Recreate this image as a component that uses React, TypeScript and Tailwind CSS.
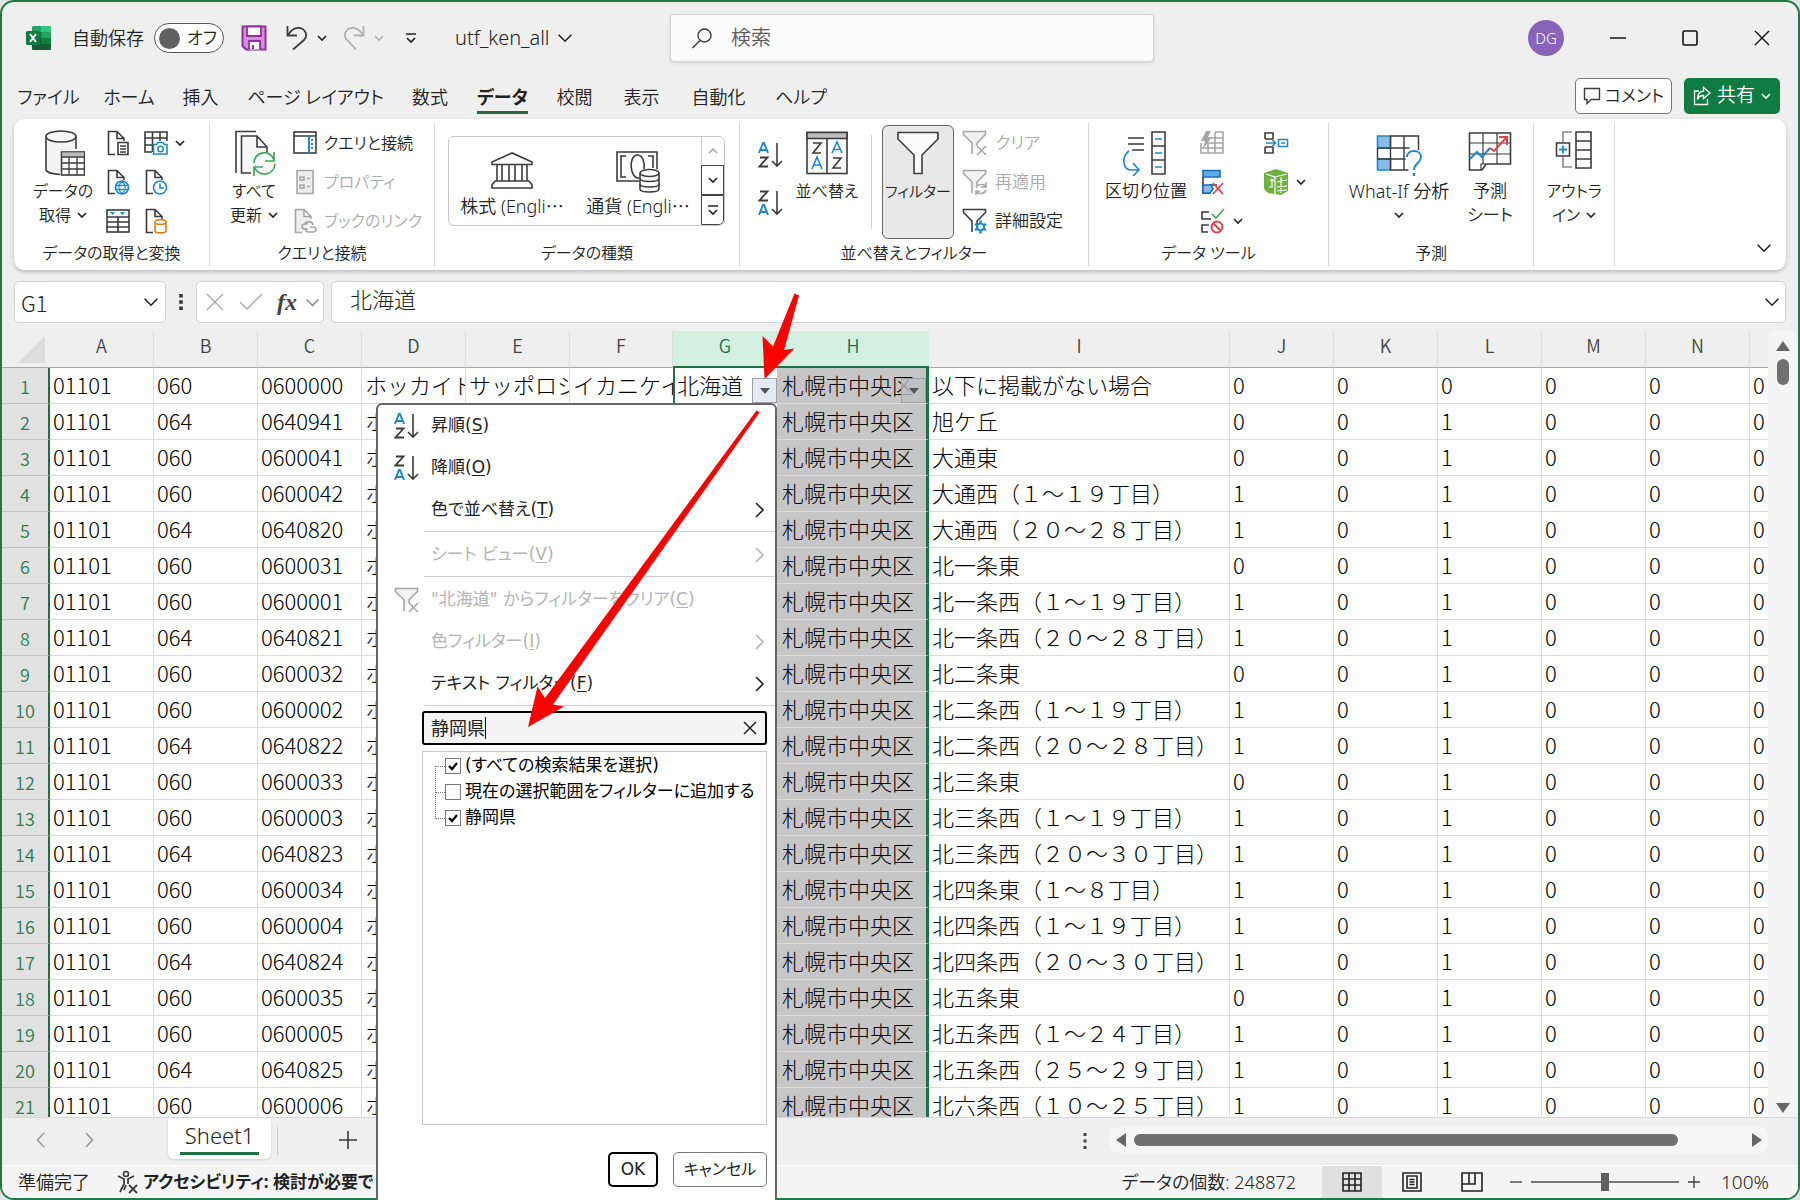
import type { ReactNode } from 'react';

// Spreadsheet window: title bar, ribbon, formula bar, grid, sheet tabs, status bar.
// The AutoFilter menu and the two callout arrows sit on top of the window.

type SvgProps = { w: number; h: number; children: ReactNode; className?: string };

const INK = '#3b3b3b';
const BLUE = '#1e88c9';
const FAINT = '#a6a6a6';

function Svg({ w, h, children, className = '' }: SvgProps) {
  return (
    <svg
      width={w}
      height={h}
      viewBox={`0 0 ${w} ${h}`}
      fill="none"
      stroke={INK}
      strokeWidth="1.6"
      className={`shrink-0 ${className}`}
      aria-hidden="true"
    >
      {children}
    </svg>
  );
}

function Chevron({ color = '#222', size = 10 }: { color?: string; size?: number }) {
  return (
    <svg width={size} height={size} viewBox="0 0 10 10" fill="none" className="shrink-0" aria-hidden="true">
      <path d="M1 3l4 4 4-4" stroke={color} strokeWidth={size > 10 ? 1 : 1.6} />
    </svg>
  );
}

/* ---------- title bar ---------- */

function ExcelLogo() {
  return (
    <Svg w={26} h={26}>
      <g stroke="none">
        <rect x="6" y="1" width="19" height="24" rx="1.5" fill="#21a366" />
        <path d="M15 1h8.500a1.500 1.500 0 011.500 1.500V7H15z" fill="#33c481" />
        <path d="M6 7h9.500v6H6z" fill="#107c41" />
        <path d="M15.500 13H25v6h-9.500z" fill="#107c41" />
        <path d="M6 13h9.500v6H6zM6 19h19v4.500a1.500 1.500 0 01-1.500 1.500h-16A1.500 1.500 0 016 23.500z" fill="#185c37" />
        <rect x="0" y="6" width="14" height="14" rx="1.500" fill="#107c41" />
      </g>
      <path d="M4 9l6 8M10 9l-6 8" stroke="#fff" strokeWidth="2" />
    </Svg>
  );
}

function TitleBar() {
  return (
    <header className="flex h-[72px] shrink-0 items-center">
      <div className="flex w-[668px] shrink-0 items-center pl-[24px]">
        <ExcelLogo />
        <label htmlFor="autosave" className="ml-[20px] text-[18px] leading-6">自動保存</label>
        <button
          id="autosave"
          type="button"
          className="ml-[10px] flex h-[30px] w-[70px] items-center rounded-full border border-[#555] bg-white pl-[4px] text-[17px]"
        >
          <span className="mr-[7px] size-[21px] rounded-full bg-[#616161]" />
          オフ
        </button>
        <button type="button" aria-label="保存" className="ml-[17px]">
          <Svg w={26} h={26}>
            <path d="M1.500 1.500h23v23H5l-3.500-3.500z" fill="#d98be0" stroke="#8e2fa0" strokeWidth="2" />
            <path d="M6 1.500h14v9.500H6zM8 24.500V16h11v8.500" fill="#fff" stroke="#8e2fa0" strokeWidth="1.800" />
            <path d="M12 24v-4" stroke="#8e2fa0" strokeWidth="2" />
          </Svg>
        </button>
        <button type="button" aria-label="元に戻す" className="ml-[18px] flex items-center gap-[8px]">
          <Svg w={24} h={26}>
            <path d="M2.500 1v9.500h9.500M3 10c3-5 7-8 12-7 6 1.500 8 8 4 12L8 24.500" strokeWidth="1.800" />
          </Svg>
          <Chevron />
        </button>
        <button type="button" aria-label="やり直し" className="ml-[15px] flex items-center gap-[8px]">
          <Svg w={24} h={26}>
            <path d="M21.500 1v9.500H12M21 10C18 5 14 2 9 3 3 4.500 1 11 5 15l9 9.500" stroke="#b0b0b0" strokeWidth="1.800" />
          </Svg>
          <Chevron color="#b0b0b0" />
        </button>
        <button type="button" aria-label="カスタマイズ" className="ml-[21px]">
          <Svg w={12} h={12}>
            <path d="M1 2h10M2 6l4 4 4-4" stroke="#222" strokeWidth="1.700" />
          </Svg>
        </button>
        <button type="button" className="ml-[38px] flex items-center gap-[7px] text-[20px]">
          utf_ken_all <Chevron size={16} />
        </button>
      </div>
      <div className="flex h-[48px] w-[484px] shrink-0 items-center rounded-[4px] border border-[#d4d4d4] bg-[#fbfbfb] pl-[20px] shadow-sm">
        <Svg w={22} h={22}>
          <circle cx="13.500" cy="8.500" r="6.500" strokeWidth="1.400" />
          <path d="M9 13.500L1.500 21" strokeWidth="1.400" />
        </Svg>
        <input
          aria-label="検索"
          placeholder="検索"
          className="ml-[18px] min-w-0 flex-1 bg-transparent text-[20px] outline-none placeholder:text-[#5a5a5a]"
        />
      </div>
      <div className="flex flex-1 items-center justify-end pr-[28px]">
        <span className="mr-[46px] grid size-[36px] place-items-center rounded-full bg-[#8764b8] text-[15px] text-white">DG</span>
        <button type="button" aria-label="最小化" className="mr-[56px]">
          <Svg w={16} h={18}><path d="M0 9h16" stroke="#111" /></Svg>
        </button>
        <button type="button" aria-label="最大化" className="mr-[56px]">
          <Svg w={16} h={18}><rect x="1" y="2" width="14" height="14" rx="1.500" stroke="#111" /></Svg>
        </button>
        <button type="button" aria-label="閉じる">
          <Svg w={16} h={18}><path d="M1 2l14 14M15 2L1 16" stroke="#111" strokeWidth="1.400" /></Svg>
        </button>
      </div>
    </header>
  );
}

const TABS = [
  { label: 'ファイル', width: 'w-[87px]' },
  { label: 'ホーム', width: 'w-[74px]' },
  { label: '挿入', width: 'w-[69px]' },
  { label: 'ページ レイアウト', width: 'w-[161px]' },
  { label: '数式', width: 'w-[68px]' },
  { label: 'データ', width: 'w-[77px]' },
  { label: '校閲', width: 'w-[67px]' },
  { label: '表示', width: 'w-[67px]' },
  { label: '自動化', width: 'w-[87px]' },
  { label: 'ヘルプ', width: 'w-[78px]' },
];

function TabStrip() {
  return (
    <nav className="flex h-[45px] shrink-0 items-center pr-[18px] pl-[3px] text-[18px]">
      {TABS.map((tab) => (
        <button key={tab.label} type="button" className={`flex h-[38px] shrink-0 flex-col items-center whitespace-nowrap ${tab.width}`}>
          <span className={`block h-[36px] leading-[38px] ${tab.label === 'データ' ? 'border-b-[3px] border-[#1e6b41] font-bold' : ''}`}>
            {tab.label}
          </span>
        </button>
      ))}
      <div className="flex flex-1 justify-end gap-[12px] pb-[2px]">
        <button type="button" className="flex h-[36px] w-[97px] items-center justify-center gap-[4px] rounded-[5px] border border-[#777] bg-white text-[17px] whitespace-nowrap">
          <Svg w={18} h={18}><path d="M1.500 1.500h15v11H8l-4 4v-4H1.500z" strokeWidth="1.400" /></Svg>
          コメント
        </button>
        <button type="button" className="flex h-[36px] w-[96px] items-center justify-center gap-[6px] rounded-[5px] bg-[#107c41] text-[19px] whitespace-nowrap text-white">
          <Svg w={18} h={20}>
            <path d="M6 5H1.500v13.500h13V13M10.500 1.500L17 7l-6.500 5.500V9.500c-3 0-5 1-6 4 0-5 2-8 6-8.500z" stroke="#fff" strokeWidth="1.300" />
          </Svg>
          共有
          <Chevron color="#fff" size={10} />
        </button>
      </div>
    </nav>
  );
}

/* ---------- ribbon icons ---------- */

function DatabaseIcon() {
  return (
    <Svg w={44} h={46}>
      <path d="M6 9v30c1 2 6 4 13 4V21h15V9c-6 4-22 4-28 0z" fill="#f4f4f4" stroke="none" />
      <ellipse cx="20" cy="6.500" rx="15" ry="5.500" fill="#f7f7f7" />
      <path d="M5 6.500v33c0 2.500 6 4.500 14 5M35 6.500V19" />
      <rect x="20.500" y="22" width="23" height="23" fill="#fff" />
      <path d="M21 22.500h22v4H21z" fill="#bbb" stroke="none" />
      <path d="M20.500 27h23M20.500 33h23M20.500 39h23M28 27v18M36 27v18" strokeWidth="1.300" />
    </Svg>
  );
}

function RefreshAllIcon() {
  return (
    <Svg w={44} h={46}>
      <path d="M4 43V1.500h20" />
      <path d="M19 43H9.500V6H25l10 11v6" fill="#f7f7f7" />
      <path d="M25 6v11h10" />
      <g stroke="#3fa65a" strokeWidth="1.700">
        <path d="M22 33c0-12 17-14 20-3M42 22v9h-9M43 34c-1 12-17 13-20 4M22 46v-9h9" />
      </g>
    </Svg>
  );
}

// Small document outline shared by several data-source buttons.
function Doc({ children, muted = false }: { children?: ReactNode; muted?: boolean }) {
  return (
    <Svg w={24} h={26}>
      <path d="M9 24.500H2.500v-23H11l7 7V11M11 1.500v7h7" stroke={muted ? FAINT : INK} fill={muted ? '#eee' : 'none'} />
      {children}
    </Svg>
  );
}

function TableCameraIcon() {
  return (
    <Svg w={24} h={26}>
      <path d="M8 22H1V2h22v9M1 8h22M1 15h8M8.500 2v20M16 2v9" />
      <path d="M9.500 14.500h3l1.500-2h5l1.500 2h2.500v9.500H9.500z" stroke={BLUE} fill="#fff" />
      <circle cx="16.500" cy="19" r="2.700" stroke={BLUE} />
    </Svg>
  );
}

function TableIcon() {
  return (
    <Svg w={24} h={26}>
      <rect x="1" y="2" width="22" height="22" />
      <path d="M1 9h22M1 14h22M1 19h22M12 9v15" />
      <path d="M4 4h5l-2.500 3zM14 4h5l-2.500 3z" fill={BLUE} stroke="none" />
    </Svg>
  );
}

function BankIcon() {
  return (
    <Svg w={44} h={38}>
      <path d="M2 11v2.500h40V11L22 2z" />
      <path d="M7 13.500v16M12 13.500v16M19 13.500v16M25 13.500v16M32 13.500v16M37 13.500v16M5 30h34l3 4v3H2v-3z" />
    </Svg>
  );
}

function CurrencyIcon() {
  return (
    <Svg w={46} h={46}>
      <path d="M24 34H2V5h40v17" />
      <path d="M11 9H6v21h5M33 9h5v12" />
      <path d="M24 31c-9 1-11-22-2-23 6 0 8 8 7 14" />
      <path d="M25 26v16c0 4 19 4 19 0V26" fill="#fff" />
      <ellipse cx="34.500" cy="26" rx="9.500" ry="3.500" fill="#fff" />
      <path d="M25 31.500c0 4 19 4 19 0M25 37c0 4 19 4 19 0" />
    </Svg>
  );
}

function SortGlyph({ desc = false }: { desc?: boolean }) {
  const a = desc ? 14 : 0;
  const z = desc ? 0 : 14;
  return (
    <Svg w={26} h={26}>
      <path d={`M1 ${a + 11}l4-10h1l4 10M3 ${a + 8}h5`} stroke={BLUE} strokeWidth="2" />
      <path d={`M2 ${z + 1.5}h7.500l-8 9h8.500`} strokeWidth="1.800" />
      <path d="M19 1v23M14 19l5 5 5-5" />
    </Svg>
  );
}

function SortDialogIcon() {
  return (
    <Svg w={44} h={44}>
      <rect x="2" y="1.500" width="40" height="41" fill="#fafafa" />
      <path d="M2 1.500h40v6H2z" fill="#bdbdbd" />
      <path d="M22 7.500v35" />
      <path d="M8 12h8L8 22h8M28 27h8l-8 10h8" />
      <path d="M7 38l5-12 5 12M9 34h6M27 22l5-11 5 11M29 18.500h6" stroke={BLUE} />
    </Svg>
  );
}

function FunnelIcon() {
  return (
    <Svg w={44} h={44}>
      <path d="M2 1.500h40V8L26 24v18.500h-8V24L2 8z" fill="#fbfbfb" />
    </Svg>
  );
}

function SmallFunnel({ children, muted = false }: { children?: ReactNode; muted?: boolean }) {
  return (
    <Svg w={26} h={26}>
      <path d="M10 24V13L1.500 4.500v-3h22v3L15 13v3" stroke={muted ? FAINT : INK} fill={muted ? '#f2f2f2' : 'none'} />
      {children}
    </Svg>
  );
}

function ClearMark() {
  return <path d="M15 16l9 9M24 16l-9 9" stroke={FAINT} />;
}

function TextToColumnsIcon() {
  return (
    <Svg w={46} h={46}>
      <path d="M5 8h16M5 14h16M9 20h12" />
      <path d="M6 21C-1 26-1 38 7 40h9M10 33l6 7-6 6" stroke={BLUE} />
      <path d="M29 2h13v42H29zM29 16h13M29 30h13" />
      <path d="M32 9h7M32 23h7M32 37h7" stroke={BLUE} />
    </Svg>
  );
}

function WhatIfIcon() {
  return (
    <Svg w={46} h={46}>
      <path d="M1.500 6h13v12h-13zM1.500 29h13v11h-13z" fill="#83bdec" stroke={BLUE} />
      <path d="M14.500 6h28v14M1.500 18h32M1.500 29h28M14.500 40h18M14.500 6v34M28 6v34M1.500 18v11" strokeWidth="1.400" />
      <path d="M31 27c0-8 14-8 14 0 0 6-7 6-7 13" stroke={BLUE} strokeWidth="2" />
      <path d="M38 43v3" stroke={BLUE} strokeWidth="2.400" />
    </Svg>
  );
}

function ForecastIcon() {
  return (
    <Svg w={44} h={44}>
      <path d="M1.500 2h41v31H18l-4 6H1.500z" />
      <path d="M1.500 12h41M1.500 23h41M15 2v31M29 2v31M18 33h-5v6" strokeWidth="1.200" />
      <path d="M2 28l7-7 5 5 8-9" stroke={BLUE} strokeWidth="2" />
      <path d="M22 17l4 3L38 7M31 6h8v8" stroke="#e0434b" strokeWidth="2" />
    </Svg>
  );
}

function OutlineIcon() {
  return (
    <Svg w={40} h={44}>
      <path d="M22 1h15v36H22zM22 10h15M22 19h15M22 28h15" />
      <path d="M18 1H9v10M9 26v10h9" stroke="#888" />
      <path d="M2.500 12h13v13h-13z" />
      <path d="M9 14.500v8M5 18.500h8" stroke={BLUE} strokeWidth="1.800" />
    </Svg>
  );
}

/* ---------- ribbon ---------- */

function Group({ label, className, children }: { label: string; className: string; children: ReactNode }) {
  return (
    <section aria-label={label} className={`mt-[4px] mb-[4px] flex shrink-0 flex-col border-r border-[#d8d8d8] ${className}`}>
      <div className="flex h-[119px]">{children}</div>
      <div className="text-center text-[16px] leading-[26px]">{label}</div>
    </section>
  );
}

function BigButton({ icon, lines, className, chevron = false }: { icon: ReactNode; lines: string[]; className: string; chevron?: boolean }) {
  return (
    <button type="button" className={`flex shrink-0 flex-col items-center pt-[8px] leading-[24px] whitespace-nowrap ${className}`}>
      <span className="mb-[4px] flex h-[44px] items-center">{icon}</span>
      {lines.map((line, i) => (
        <span key={i} className="flex min-h-[24px] items-center gap-[6px]">
          {line}
          {chevron && i === lines.length - 1 && <Chevron />}
        </span>
      ))}
    </button>
  );
}

function SmallButton({ icon, label, muted = false, chevron = false }: { icon: ReactNode; label?: string; muted?: boolean; chevron?: boolean }) {
  return (
    <button type="button" className={`flex h-[39px] items-center gap-[7px] whitespace-nowrap ${muted ? 'text-[#ababab]' : ''}`}>
      {icon}
      {label}
      {chevron && <Chevron />}
    </button>
  );
}

function GalleryItem({ icon, label }: { icon: ReactNode; label: string }) {
  return (
    <button type="button" className="flex w-[126px] flex-col items-center pt-[10px] text-[18px] leading-[24px] whitespace-nowrap">
      <span className="flex h-[46px] items-center">{icon}</span>
      <span>
        {label}
        <span lang="ja" className="font-['Noto_Sans_CJK_JP',sans-serif] [font-feature-settings:normal]">⋯</span>
      </span>
    </button>
  );
}

function Ribbon() {
  return (
    <div className="mx-[12px] flex h-[151px] shrink-0 rounded-[10px] bg-white text-[16px] shadow-[0_2px_4px_rgba(0,0,0,0.22)]">
      <Group label="データの取得と変換" className="w-[196px]">
        <BigButton icon={<DatabaseIcon />} lines={['データの', '取得']} chevron className="ml-[15px] w-[68px]" />
        <div className="ml-[9px]">
          <SmallButton icon={<Doc><path d="M12 12.500h10v12H12zM14 16h6M14 19h6M14 22h6" /></Doc>} />
          <SmallButton
            icon={
              <Doc>
                <circle cx="16" cy="18.500" r="6.500" stroke={BLUE} fill="#fff" />
                <path d="M9.500 16.500h13M9.500 20.500h13M16 12c-4 4-4 9 0 13 4-4 4-9 0-13z" stroke={BLUE} strokeWidth="1.300" />
              </Doc>
            }
          />
          <SmallButton icon={<TableIcon />} />
        </div>
        <div className="ml-[14px]">
          <SmallButton icon={<TableCameraIcon />} chevron />
          <SmallButton
            icon={
              <Doc>
                <circle cx="16" cy="18.500" r="6.500" stroke={BLUE} fill="#fff" />
                <path d="M16 14.500v4.500h4" stroke={BLUE} />
              </Doc>
            }
          />
          <SmallButton
            icon={
              <Doc>
                <path d="M11 14v9c0 2.500 11 2.500 11 0v-9" stroke="#dd7a16" fill="#fff" />
                <ellipse cx="16.500" cy="14" rx="5.500" ry="2.300" stroke="#dd7a16" fill="#fff" />
              </Doc>
            }
          />
        </div>
      </Group>

      <Group label="クエリと接続" className="w-[225px]">
        <BigButton icon={<RefreshAllIcon />} lines={['すべて', '更新']} chevron className="ml-[8px] w-[72px]" />
        <div className="ml-[3px]">
          <SmallButton
            label="クエリと接続"
            icon={
              <Svg w={24} h={26}>
                <rect x="1" y="2" width="22" height="21" />
                <path d="M1 6h22" />
                <path d="M16 6v17M19 9v2M19 13v2M19 17v2" stroke={BLUE} strokeWidth="2" />
              </Svg>
            }
          />
          <SmallButton
            muted
            label="プロパティ"
            icon={
              <Svg w={24} h={26}>
                <path d="M4 1.500h16v23H4z" stroke={FAINT} fill="#eee" />
                <path d="M7 8h4v3H7zM7 16h4v3H7zM14 9.500h3M14 17.500h3" stroke={FAINT} />
              </Svg>
            }
          />
          <SmallButton
            muted
            label="ブックのリンク"
            icon={
              <Doc muted>
                <path d="M15 16h-3c-4 0-4 5 0 5h3M17 19h3c4 0 4 5 0 5h-4c-3 0-4-2-3-4M12 16c0-3 8-3 8 1" stroke={FAINT} fill="none" />
              </Doc>
            }
          />
        </div>
      </Group>

      <Group label="データの種類" className="w-[305px]">
        <div className="mt-[13px] ml-[13px] flex h-[90px] w-[277px] overflow-hidden rounded-[6px] border border-[#c8c8c8]">
          <GalleryItem icon={<BankIcon />} label="株式 (Engli" />
          <GalleryItem icon={<CurrencyIcon />} label="通貨 (Engli" />
          <div className="flex flex-1 flex-col">
            <button type="button" aria-label="前へ" className="grid flex-1 place-items-center border-l border-[#ccc]">
              <Svg w={10} h={10}><path d="M1 7l4-4 4 4" stroke="#aaa" /></Svg>
            </button>
            <button type="button" aria-label="次へ" className="grid flex-1 place-items-center border border-[#444]"><Chevron /></button>
            <button type="button" aria-label="その他" className="grid flex-1 place-items-center rounded-br-[5px] border border-[#444]">
              <Svg w={12} h={12}><path d="M1 2h10M2 6l4 4 4-4" stroke="#222" /></Svg>
            </button>
          </div>
        </div>
      </Group>

      <Group label="並べ替えとフィルター" className="w-[349px]">
        <div className="ml-[18px] flex flex-col gap-[22px] pt-[19px]">
          <button type="button" aria-label="昇順"><SortGlyph /></button>
          <button type="button" aria-label="降順"><SortGlyph desc /></button>
        </div>
        <BigButton icon={<SortDialogIcon />} lines={['並べ替え']} className="ml-[8px] w-[70px]" />
        <div className="mt-[12px] ml-[9px] h-[94px] w-px bg-[#d0d0d0]" />
        <button type="button" aria-pressed="true" className="mt-[2px] ml-[10px] flex h-[114px] w-[72px] shrink-0 flex-col items-center rounded-[6px] border border-[#666] bg-[#e8e8e8] pt-[5px] text-[15px] leading-[24px] whitespace-nowrap">
          <span className="mb-[4px]"><FunnelIcon /></span>
          フィルター
        </button>
        <div className="ml-[8px] text-[17px]">
          <SmallButton muted label="クリア" icon={<SmallFunnel muted><ClearMark /></SmallFunnel>} />
          <SmallButton
            muted
            label="再適用"
            icon={
              <SmallFunnel muted>
                <path d="M14 19c1-4 8-5 10-1M24 13v5h-5M24 21c-1 4-8 5-10 1M14 26v-4h4" stroke={FAINT} />
              </SmallFunnel>
            }
          />
          <SmallButton
            label="詳細設定"
            icon={
              <SmallFunnel>
                <path d="M18.500 12.500v13M13 16l11 6M13 22l11-6" stroke={BLUE} strokeWidth="2.400" />
                <circle cx="18.500" cy="19" r="3.500" stroke={BLUE} strokeWidth="2.200" fill="#fff" />
              </SmallFunnel>
            }
          />
        </div>
      </Group>

      <Group label="データ ツール" className="w-[240px]">
        <BigButton icon={<TextToColumnsIcon />} lines={['区切り位置']} className="ml-[12px] w-[90px] text-[17px]" />
        <div className="ml-[9px] w-[49px]">
          <SmallButton
            icon={
              <Svg w={24} h={26}>
                <path d="M1 13v10h22V2h-8M1 18h22M8 12v11M15 2v21M11 8h12M9 13h14" stroke={FAINT} />
                <path d="M6 1L1 11h4l-2 8 9-12H8l3-6z" fill={FAINT} stroke="none" />
              </Svg>
            }
          />
          <SmallButton
            icon={
              <Svg w={24} h={26}>
                <path d="M3 1.500h17V8H3z" fill="#5ea9e6" stroke="#1672b8" />
                <path d="M3 8v16h7v-8h7" />
                <path d="M3 16h8l2 4-3 4H3z" fill="#83bdec" stroke="#1672b8" />
                <path d="M13 14l10 11M23 14L13 25" stroke="#e0434b" strokeWidth="1.800" />
              </Svg>
            }
          />
          <SmallButton
            chevron
            icon={
              <Svg w={26} h={26}>
                <path d="M9 4H2v7h9M9 17H2v7h6" />
                <path d="M12 6l4 4 8-9" stroke="#3fa65a" />
                <circle cx="17" cy="19" r="5.500" stroke="#e0434b" strokeWidth="2" />
                <path d="M13 15l8 8" stroke="#e0434b" strokeWidth="2" />
              </Svg>
            }
          />
        </div>
        <div className="ml-[14px]">
          <SmallButton
            icon={
              <Svg w={26} h={26}>
                <path d="M2 9V3h8v6M2 17v6h8v-6M2 9h8M2 17h8" />
                <path d="M3 13h9M9 9.500l3.500 3.500L9 16.500M15.500 9.500h9v7h-9zM18 13h4" stroke={BLUE} />
              </Svg>
            }
          />
          <SmallButton
            chevron
            icon={
              <Svg w={26} h={26}>
                <path d="M1 4l12-4 12 4v18l-7 4-13-2-4-4z" fill="#6cb33e" stroke="none" />
                <path d="M3 5l9 3v17M12 8l12-3" stroke="#fff" strokeWidth="1.200" />
                <path d="M6 18h3v-8M7 12l2-2 2 2M14 13l10-2M14 18l10-1M14 22l10-1M18 8v16" stroke="#fff" strokeWidth="1.200" />
              </Svg>
            }
          />
        </div>
      </Group>

      <Group label="予測" className="w-[205px]">
        <BigButton icon={<WhatIfIcon />} lines={['What-If 分析', '']} chevron className="ml-[10px] w-[120px] text-[18px]" />
        <BigButton icon={<ForecastIcon />} lines={['予測', 'シート']} className="ml-[4px] w-[54px] text-[17px]" />
      </Group>

      <section aria-label="アウトライン" className="mt-[4px] mb-[4px] w-[81px] shrink-0 border-r border-[#d8d8d8]">
        <BigButton icon={<OutlineIcon />} lines={['アウトラ', 'イン']} chevron className="w-full" />
      </section>
      <button type="button" aria-label="リボンを折りたたむ" className="mb-[14px] ml-auto self-end pr-[14px]">
        <Chevron size={16} />
      </button>
    </div>
  );
}

/* ---------- formula bar ---------- */

function FormulaBar() {
  return (
    <div className="mx-[12px] mt-[11px] flex h-[42px] shrink-0 items-stretch font-['Noto_Sans_CJK_JP',sans-serif] text-[22px] font-light [font-feature-settings:normal]">
      <div className="flex w-[152px] shrink-0 items-center rounded-[5px] border border-[#d4d4d4] bg-white pr-[6px] pl-[6px]">
        <input aria-label="名前ボックス" defaultValue="G1" className="min-w-0 flex-1 bg-transparent pt-px outline-none" />
        <Chevron size={16} />
      </div>
      <div className="flex w-[30px] shrink-0 items-center justify-center">
        <Svg w={4} h={16}><path d="M2 0v3.500M2 6.250v3.500M2 12.500V16" stroke="#333" strokeWidth="3.500" /></Svg>
      </div>
      <div className="flex w-[128px] shrink-0 items-center rounded-[5px] border border-[#d4d4d4] bg-white pl-[9px]">
        <button type="button" aria-label="キャンセル"><Svg w={18} h={18}><path d="M1 1l16 16M17 1L1 17" stroke="#aaa" strokeWidth="1.400" /></Svg></button>
        <button type="button" aria-label="入力" className="ml-[15px]"><Svg w={24} h={18}><path d="M1 9l7 7L23 1" stroke="#aaa" strokeWidth="1.400" /></Svg></button>
        <button type="button" aria-label="関数の挿入" className="ml-[14px] font-['Liberation_Serif',serif] text-[24px] leading-none font-bold text-[#444] italic">fx</button>
        <span className="ml-[8px]"><Chevron color="#888" size={15} /></span>
      </div>
      <div className="ml-[7px] flex flex-1 items-center rounded-[5px] border border-[#d4d4d4] bg-white pr-[5px] pl-[18px]">
        <input aria-label="数式バー" defaultValue="北海道" className="min-w-0 flex-1 bg-transparent pb-[7px] outline-none" />
        <Chevron size={16} />
      </div>
    </div>
  );
}

/* ---------- grid ---------- */

const COLUMNS = [
  { name: 'A', width: 'w-[104px]' },
  { name: 'B', width: 'w-[104px]' },
  { name: 'C', width: 'w-[104px]' },
  { name: 'D', width: 'w-[104px]' },
  { name: 'E', width: 'w-[104px]' },
  { name: 'F', width: 'w-[103px]' },
  { name: 'G', width: 'w-[104px]' },
  { name: 'H', width: 'w-[152px]' },
  { name: 'I', width: 'w-[301px]' },
  { name: 'J', width: 'w-[104px]' },
  { name: 'K', width: 'w-[104px]' },
  { name: 'L', width: 'w-[104px]' },
  { name: 'M', width: 'w-[104px]' },
  { name: 'N', width: 'w-[104px]' },
  { name: '', width: 'w-[104px]' },
];

// [old postal code, postal code, town, spans several blocks]
const TOWNS: Array<[string, string, string, string]> = [
  ['060', '0600000', '以下に掲載がない場合', '0'],
  ['064', '0640941', '旭ケ丘', '0'],
  ['060', '0600041', '大通東', '0'],
  ['060', '0600042', '大通西（１～１９丁目）', '1'],
  ['064', '0640820', '大通西（２０～２８丁目）', '1'],
  ['060', '0600031', '北一条東', '0'],
  ['060', '0600001', '北一条西（１～１９丁目）', '1'],
  ['064', '0640821', '北一条西（２０～２８丁目）', '1'],
  ['060', '0600032', '北二条東', '0'],
  ['060', '0600002', '北二条西（１～１９丁目）', '1'],
  ['064', '0640822', '北二条西（２０～２８丁目）', '1'],
  ['060', '0600033', '北三条東', '0'],
  ['060', '0600003', '北三条西（１～１９丁目）', '1'],
  ['064', '0640823', '北三条西（２０～３０丁目）', '1'],
  ['060', '0600034', '北四条東（１～８丁目）', '1'],
  ['060', '0600004', '北四条西（１～１９丁目）', '1'],
  ['064', '0640824', '北四条西（２０～３０丁目）', '1'],
  ['060', '0600035', '北五条東', '0'],
  ['060', '0600005', '北五条西（１～２４丁目）', '1'],
  ['064', '0640825', '北五条西（２５～２９丁目）', '1'],
  ['060', '0600006', '北六条西（１０～２５丁目）', '1'],
];

function FilterButton({ shaded = false }: { shaded?: boolean }) {
  return (
    <button
      type="button"
      aria-label="フィルター"
      className={`absolute right-0 bottom-0 grid size-[25px] place-items-center border border-[#a0a0a0] ${shaded ? 'bg-[#bdbfc2]/80' : 'bg-[#e4e9f2]'}`}
    >
      <Svg w={10} h={6}><path d="M0 0h10L5 6z" fill="#555" stroke="none" /></Svg>
    </button>
  );
}

function cellClass(col: number) {
  if (col === 5) return 'pl-[3px] bg-white';
  if (col === 6) return 'pl-[2px] border-l-2 border-l-[#1e7145] bg-white';
  if (col === 7) return 'pl-[5px] border-r-[3px] border-r-[#1e7145] border-b-[#b0b0b0] bg-[#c6c6c6]';
  return 'pl-[3px] border-r border-r-[#dcdcdc] border-b-[#dcdcdc] bg-white';
}

function rowCells(r: number) {
  const [oldCode, code, town, blocks] = TOWNS[r];
  const names = r === 0 ? ['ホッカイド', 'サッポロシ', 'イカニケイ', '北海道'] : ['ホ', '', '', ''];
  return ['01101', oldCode, code, ...names, '札幌市中央区', town, blocks, '0', r === 0 ? '0' : '1', '0', '0', '0'];
}

function Grid() {
  return (
    <div className="min-w-0 flex-1 overflow-hidden">
      <table className="w-[1852px] table-fixed border-separate border-spacing-0 font-['Noto_Sans_CJK_JP',sans-serif] text-[22px] font-light whitespace-nowrap text-black">
        <thead>
          <tr className="h-[37px] text-[18px] leading-[26px] text-[#444]">
            <th className="w-[48px] border-b border-[#a8a8a8] p-0" aria-label="すべて選択">
              <Svg w={28} h={28} className="mt-[2px] ml-[16px]"><path d="M27 0v27H0z" fill="#dcdcdc" stroke="none" /></Svg>
            </th>
            {COLUMNS.map((col) => {
              const selected = col.name === 'G' || col.name === 'H';
              return (
                <th
                  key={col.name}
                  scope="col"
                  className={`${col.width} p-0 font-[350] ${
                    selected
                      ? 'border-b-2 border-[#1e7145] bg-[#d2f0e0] pb-[8px] text-[#1e7145]'
                      : 'border-r border-b border-r-[#dedede] border-b-[#a8a8a8] pb-[9px]'
                  }`}
                >
                  {col.name}
                </th>
              );
            })}
          </tr>
        </thead>
        <tbody>
          {TOWNS.map(([, code], r) => (
            <tr key={code} className="h-[36px]">
              <th scope="row" className="border-r-2 border-b border-r-[#1e7145] border-b-[#c4c4c4] bg-[#e2e1e1] p-0 text-[18px] leading-[30px] font-[350] text-[#2f7d55]">
                {r + 1}
              </th>
              {rowCells(r).map((text, c) => (
                <td key={c} className={`relative overflow-hidden border-b border-b-[#dcdcdc] p-0 pb-[3px] leading-[32px] ${cellClass(c)}`}>
                  {text}
                  {r === 0 && c === 6 && <FilterButton />}
                  {r === 0 && c === 7 && <FilterButton shaded />}
                </td>
              ))}
            </tr>
          ))}
        </tbody>
      </table>
    </div>
  );
}

function VerticalScroll() {
  return (
    <div className="flex w-[30px] shrink-0 flex-col items-center rounded-t-[8px] bg-[#f4f4f4] pt-[10px] pb-[4px]">
      <Svg w={14} h={10}><path d="M7 0l7 10H0z" fill="#666" stroke="none" /></Svg>
      <div className="mt-[8px] h-[26px] w-[12px] rounded-full bg-[#707070]" />
      <div className="flex-1" />
      <Svg w={14} h={10}><path d="M0 0h14L7 10z" fill="#666" stroke="none" /></Svg>
    </div>
  );
}

/* ---------- bottom bars ---------- */

function SheetBar() {
  return (
    <div className="flex h-[48px] shrink-0 items-start border-t border-[#d8d8d8]">
      <div className="flex h-[44px] w-[166px] shrink-0 items-center gap-[40px] pl-[34px]">
        <Svg w={9} h={16}><path d="M8 1L1.500 8 8 15" stroke="#999" /></Svg>
        <Svg w={9} h={16}><path d="M1 1l6.500 7L1 15" stroke="#999" /></Svg>
      </div>
      <button type="button" className="h-[41px] w-[103px] shrink-0 rounded-b-[6px] bg-white pb-[4px] shadow-sm">
        <span className="mx-[12px] block h-[37px] border-b-[3px] border-[#1e7145] text-[22px] leading-[35px]">Sheet1</span>
      </button>
      <div className="mt-[9px] ml-[6px] h-[28px] w-px bg-[#c8c8c8]" />
      <button type="button" aria-label="新しいシート" className="mt-[13px] ml-[61px]">
        <Svg w={18} h={18}><path d="M9 0v18M0 9h18" /></Svg>
      </button>
      <div className="flex-1" />
      <Svg w={4} h={16} className="mt-[15px]"><path d="M2 0v3M2 6.500v3M2 13v3" stroke="#444" strokeWidth="3" /></Svg>
      <div className="mt-[9px] mr-[30px] ml-[22px] flex h-[26px] w-[659px] items-center rounded-[8px] bg-[#f5f5f5] pr-[6px] pl-[7px]">
        <Svg w={10} h={14}><path d="M10 0v14L0 7z" fill="#666" stroke="none" /></Svg>
        <div className="ml-[8px] h-[12px] w-[544px] rounded-full bg-[#707070]" />
        <div className="flex-1" />
        <Svg w={10} h={14}><path d="M0 0v14l10-7z" fill="#666" stroke="none" /></Svg>
      </div>
    </div>
  );
}

function StatusBar() {
  return (
    <footer className="flex h-[33px] shrink-0 items-center border-t border-[#fff] bg-[#f4f4f4] text-[18px] whitespace-nowrap">
      <span className="ml-[16px]">準備完了</span>
      <Svg w={24} h={24} className="ml-[26px]">
        <circle cx="10" cy="4" r="2.500" />
        <path d="M2 6l6 3v5l-4 8M18 6l-6 3v5M10 15l-2 5M13 15l8 8M21 15l-8 8" strokeWidth="1.800" />
      </Svg>
      <span className="ml-[3px] text-[17px] font-bold">アクセシビリティ: 検討が必要で</span>
      <div className="flex-1" />
      <span>データの個数: 248872</span>
      <button type="button" aria-label="標準" className="ml-[26px] grid h-full w-[60px] place-items-center bg-[#e0e0e0]">
        <Svg w={20} h={20}><path d="M1 1h18v18H1zM1 7h18M1 13h18M7 1v18M13 1v18" stroke="#222" /></Svg>
      </button>
      <button type="button" aria-label="ページ レイアウト表示" className="grid h-full w-[60px] place-items-center">
        <Svg w={20} h={20}><path d="M1 1h18v18H1zM5 4h10v12H5zM7.500 7.500h5M7.500 10h5M7.500 12.500h5" stroke="#222" /></Svg>
      </button>
      <button type="button" aria-label="改ページ プレビュー" className="grid h-full w-[60px] place-items-center">
        <Svg w={22} h={20}><path d="M1 1h20v18H1zM1 12h13V1M8 1v11" stroke="#222" /></Svg>
      </button>
      <button type="button" aria-label="縮小" className="ml-[8px]"><Svg w={12} h={12}><path d="M0 6h12" strokeWidth="1.300" /></Svg></button>
      <input
        type="range"
        aria-label="ズーム"
        defaultValue={50}
        className="mx-[9px] h-[18px] w-[148px] appearance-none bg-[linear-gradient(#777,#777)] bg-[length:100%_2px] bg-center bg-no-repeat [&::-webkit-slider-thumb]:h-[18px] [&::-webkit-slider-thumb]:w-[8px] [&::-webkit-slider-thumb]:appearance-none [&::-webkit-slider-thumb]:bg-[#606060]"
      />
      <button type="button" aria-label="拡大"><Svg w={12} h={12}><path d="M0 6h12M6 0v12" strokeWidth="1.300" /></Svg></button>
      <span className="mr-[29px] ml-[21px] text-[19px]">100%</span>
    </footer>
  );
}

/* ---------- filter menu ---------- */

type MenuItemProps = { label: string; hotkey: string; icon?: ReactNode; muted?: boolean; sub?: boolean };

function MenuItem({ label, hotkey, icon, muted = false, sub = false }: MenuItemProps) {
  return (
    <button type="button" className={`flex h-[42px] w-full items-center pr-[10px] pl-[16px] whitespace-nowrap ${muted ? 'text-[#b4b4b4]' : ''}`}>
      <span className="w-[37px] shrink-0 text-left">{icon}</span>
      <span>
        {label}(<u className="underline-offset-2">{hotkey}</u>)
      </span>
      {sub && (
        <Svg w={10} h={16} className="ml-auto">
          <path d="M1 1l7 7-7 7" stroke={muted ? '#b4b4b4' : '#222'} />
        </Svg>
      )}
    </button>
  );
}

function Separator() {
  return <div className="mb-[2px] ml-[46px] h-px bg-[#cfcfcf]" />;
}

function TreeItem({ id, label, checked = false }: { id: string; label: string; checked?: boolean }) {
  return (
    <li className="flex h-[26px] items-center">
      <span className="h-px w-[10px] border-t border-dotted border-[#777]" />
      <span className="relative grid size-[16px] place-items-center">
        <input id={id} type="checkbox" defaultChecked={checked} className="peer size-[16px] appearance-none border border-[#777] bg-white" />
        <svg width="10" height="9" viewBox="0 0 10 9" fill="none" className="pointer-events-none absolute hidden peer-checked:block" aria-hidden="true">
          <path d="M1 4l3 3 5-6" stroke="#000" strokeWidth="2.200" />
        </svg>
      </span>
      <label htmlFor={id} className="ml-[4px] whitespace-nowrap text-black">{label}</label>
    </li>
  );
}

function FilterMenu() {
  return (
    <div className="absolute top-[403px] left-[376px] w-[401px] rounded-t-[6px] border-2 border-[#666] bg-white font-['DejaVu_Sans','Noto_Sans_CJK_JP',sans-serif] text-[17px] font-normal">
      <MenuItem label="昇順" hotkey="S" icon={<SortGlyph />} />
      <MenuItem label="降順" hotkey="O" icon={<SortGlyph desc />} />
      <MenuItem label="色で並べ替え" hotkey="T" sub />
      <Separator />
      <MenuItem label="シート ビュー" hotkey="V" muted sub />
      <Separator />
      <MenuItem label={'"北海道" からフィルターをクリア'} hotkey="C" muted icon={<SmallFunnel muted><ClearMark /></SmallFunnel>} />
      <MenuItem label="色フィルター" hotkey="I" muted sub />
      <MenuItem label="テキスト フィルター" hotkey="F" sub />
      <Separator />
      <div className="mt-[5px] mr-[8px] ml-[44px]">
        <div className="relative flex h-[34px] items-center rounded-[3px] border-2 border-black bg-[#f4f4f4] pr-[8px] pl-[7px]">
          <input aria-label="検索" defaultValue="静岡県" className="min-w-0 flex-1 bg-transparent text-[18px] outline-none" />
          <span className="absolute left-[61px] h-[22px] w-px bg-black" />
          <button type="button" aria-label="検索をクリア"><Svg w={14} h={14}><path d="M1 1l12 12M13 1L1 13" stroke="#222" strokeWidth="1.500" /></Svg></button>
        </div>
        <div className="mt-[6px] h-[374px] border border-[#c8c8c8]">
          <ul className="relative ml-[12px] pt-px">
            <span className="absolute top-[14px] left-0 h-[53px] w-px border-l border-dotted border-[#777]" />
            <TreeItem id="all" label="(すべての検索結果を選択)" checked />
            <TreeItem id="add" label="現在の選択範囲をフィルターに追加する" />
            <TreeItem id="shizuoka" label="静岡県" checked />
          </ul>
        </div>
        <div className="mt-[27px] flex h-[50px] justify-end gap-[15px]">
          <button type="button" className="h-[35px] w-[50px] rounded-[5px] border-2 border-black">OK</button>
          <button type="button" className="h-[35px] w-[94px] rounded-[5px] border border-[#777] text-[16px] whitespace-nowrap">キャンセル</button>
        </div>
      </div>
    </div>
  );
}

function CalloutArrows() {
  return (
    <svg width="290" height="450" viewBox="520 285 290 450" className="pointer-events-none absolute top-[285px] left-[520px]" aria-hidden="true">
      <path d="M794.500 293.500L799 295.500 784 350 794.500 348.500 764.500 379 762.500 336 773 346.500z" fill="#f00" />
      <path d="M756.500 410.500L759.500 412.500 553 704.500 564 706.500 528 727 537.500 686.500 545 698z" fill="#f00" />
    </svg>
  );
}

export default function App() {
  return (
    <div className="relative h-screen overflow-hidden bg-[#dfe5e1] font-['Noto_Sans','Noto_Sans_CJK_JP',sans-serif] font-[350] text-[#222] [font-feature-settings:'palt']">
      <div className="flex h-full flex-col overflow-hidden rounded-[14px] border-2 border-[#1e7b47] bg-[#efefef]">
        <TitleBar />
        <TabStrip />
        <Ribbon />
        <FormulaBar />
        <main className="mt-[8px] flex min-h-0 flex-1 [font-feature-settings:normal]">
          <Grid />
          <VerticalScroll />
        </main>
        <SheetBar />
        <StatusBar />
      </div>
      <FilterMenu />
      <CalloutArrows />
    </div>
  );
}
